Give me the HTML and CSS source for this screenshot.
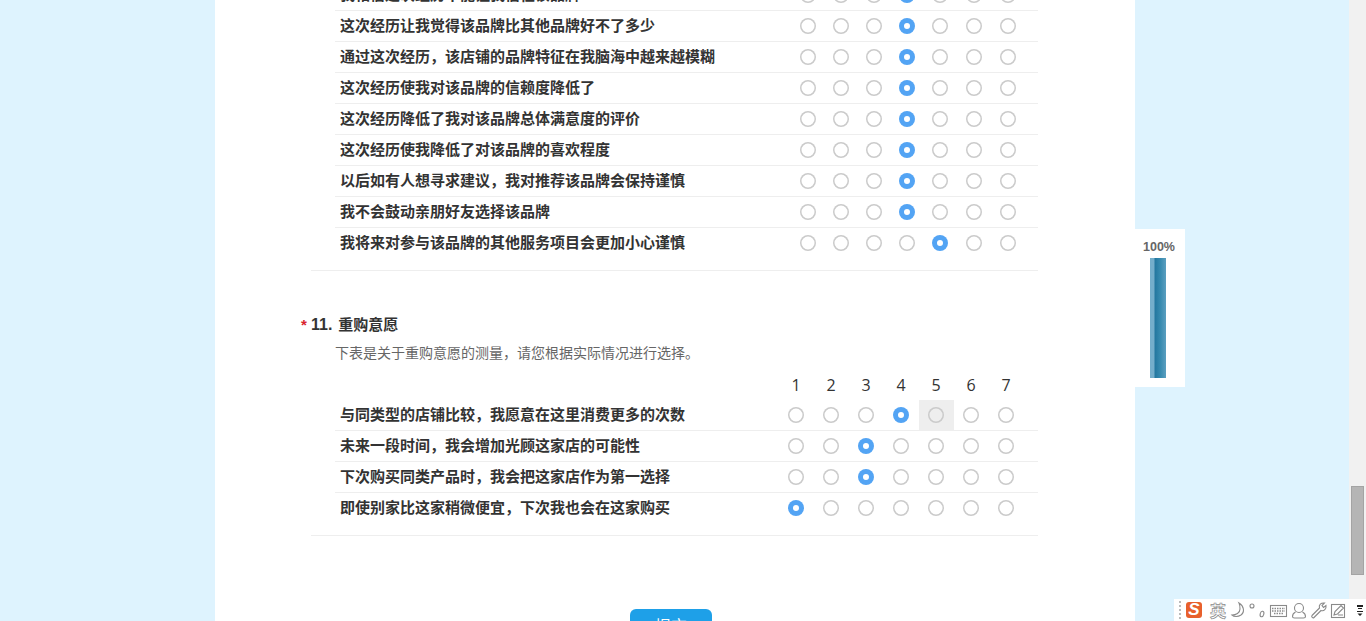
FILE: index.html
```html
<!DOCTYPE html>
<html>
<head>
<meta charset="utf-8">
<title>问卷</title>
<link rel="stylesheet" href="styles.css">
</head>
<body>
	<div class="page">
		<section class="panel">
			<div class="matrix first">
				<div class="row"><span class="label">我相信这次经历不能让我信任该品牌</span><i class="radio"></i><i class="radio"></i><i class="radio"></i><i class="radio on"></i><i class="radio"></i><i class="radio"></i><i class="radio"></i></div>
				<div class="row"><span class="label">这次经历让我觉得该品牌比其他品牌好不了多少</span><i class="radio"></i><i class="radio"></i><i class="radio"></i><i class="radio on"></i><i class="radio"></i><i class="radio"></i><i class="radio"></i></div>
				<div class="row"><span class="label">通过这次经历，该店铺的品牌特征在我脑海中越来越模糊</span><i class="radio"></i><i class="radio"></i><i class="radio"></i><i class="radio on"></i><i class="radio"></i><i class="radio"></i><i class="radio"></i></div>
				<div class="row"><span class="label">这次经历使我对该品牌的信赖度降低了</span><i class="radio"></i><i class="radio"></i><i class="radio"></i><i class="radio on"></i><i class="radio"></i><i class="radio"></i><i class="radio"></i></div>
				<div class="row"><span class="label">这次经历降低了我对该品牌总体满意度的评价</span><i class="radio"></i><i class="radio"></i><i class="radio"></i><i class="radio on"></i><i class="radio"></i><i class="radio"></i><i class="radio"></i></div>
				<div class="row"><span class="label">这次经历使我降低了对该品牌的喜欢程度</span><i class="radio"></i><i class="radio"></i><i class="radio"></i><i class="radio on"></i><i class="radio"></i><i class="radio"></i><i class="radio"></i></div>
				<div class="row"><span class="label">以后如有人想寻求建议，我对推荐该品牌会保持谨慎</span><i class="radio"></i><i class="radio"></i><i class="radio"></i><i class="radio on"></i><i class="radio"></i><i class="radio"></i><i class="radio"></i></div>
				<div class="row"><span class="label">我不会鼓动亲朋好友选择该品牌</span><i class="radio"></i><i class="radio"></i><i class="radio"></i><i class="radio on"></i><i class="radio"></i><i class="radio"></i><i class="radio"></i></div>
				<div class="row"><span class="label">我将来对参与该品牌的其他服务项目会更加小心谨慎</span><i class="radio"></i><i class="radio"></i><i class="radio"></i><i class="radio"></i><i class="radio on"></i><i class="radio"></i><i class="radio"></i></div>
			</div>
			<div class="divider first-end"></div>

			<div class="title"><span class="req">*</span><b class="num">11.</b><b>重购意愿</b></div>
			<div class="desc">下表是关于重购意愿的测量，请您根据实际情况进行选择。</div>

			<div class="matrix second">
				<div class="row head"><span class="label"></span><span class="n">1</span><span class="n">2</span><span class="n">3</span><span class="n">4</span><span class="n">5</span><span class="n">6</span><span class="n">7</span></div>
				<div class="row"><span class="label">与同类型的店铺比较，我愿意在这里消费更多的次数</span><i class="radio"></i><i class="radio"></i><i class="radio"></i><i class="radio on"></i><span class="cell"><i class="radio"></i></span><i class="radio"></i><i class="radio"></i></div>
				<div class="row"><span class="label">未来一段时间，我会增加光顾这家店的可能性</span><i class="radio"></i><i class="radio"></i><i class="radio on"></i><i class="radio"></i><i class="radio"></i><i class="radio"></i><i class="radio"></i></div>
				<div class="row"><span class="label">下次购买同类产品时，我会把这家店作为第一选择</span><i class="radio"></i><i class="radio"></i><i class="radio on"></i><i class="radio"></i><i class="radio"></i><i class="radio"></i><i class="radio"></i></div>
				<div class="row"><span class="label">即使别家比这家稍微便宜，下次我也会在这家购买</span><i class="radio on"></i><i class="radio"></i><i class="radio"></i><i class="radio"></i><i class="radio"></i><i class="radio"></i><i class="radio"></i></div>
			</div>
			<div class="divider second-end"></div>

			<div class="actions"><a class="submit" href="#">提交</a></div>
		</section>

		<aside class="progress">
			<span class="pct">100%</span>
			<div class="bar"></div>
		</aside>
	</div>

	<div class="scrollbar"><div class="thumb"></div></div>

	<div class="ime">
		<span class="grip"></span>
		<span class="ime-logo">S</span>
		<span class="ime-lang">英</span>
		<svg class="ime-icons" width="136" height="20" viewBox="0 0 136 20">
			<g fill="none" stroke="#8a8a8a" stroke-width="1.1">
				<!-- moon -->
				<path d="M9 3c5 3 6 9 2 12-3 2-7 2-9 0 4 0 8-2 8-6 0-2 0-4-1-6z"/>
				<!-- punctuation -->
				<circle cx="22" cy="6" r="2"/>
				<ellipse cx="32" cy="14" rx="1.800" ry="2.800" transform="rotate(15 32 14)"/>
				<!-- keyboard -->
				<rect x="40.500" y="5.500" width="16" height="11"/>
				<path d="M42 8.500h13M42 11h13M44 13.500h9" stroke-dasharray="1.500 1" stroke-width="1.300"/>
				<!-- user -->
				<circle cx="69" cy="8" r="4.500"/>
				<path d="M65.500 12c-2 1-3 3-3 4.500 0 1 1 1.500 2 1.500h9c1 0 2-.5 2-1.500 0-1.500-1-3.500-3-4.500"/>
				<!-- wrench -->
				<path d="M82 15.500l7.500-7.500c-1-3 1.500-5.500 5-5l-2.500 2.500 1.500 2 2.500-2c.5 3.500-2 6-5 5l-7 7c-1 1-3-.5-2-2z"/>
				<!-- edit -->
				<rect x="101.500" y="4.500" width="13" height="13"/>
				<path d="M104 15l1-3.500 6-6 2.500 2.500-6 6zM108 15h5"/>
			</g>
			<path d="M127 5h6v2h-6zM128 8h4v1h-4zM127 11h6v1h-6zM127.500 13.500h5l-2.500 2.500z" fill="#222"/>
		</svg>
	</div>
</body>
</html>
```

FILE: styles.css
```css
html,body{ margin:0; padding:0; height:100%; overflow:hidden;}
body{ display:flex; background:#def3fe; font-family:"Liberation Sans","Noto Sans CJK SC",sans-serif; color:#333;}

.page{ flex:1; position:relative; display:flex; justify-content:center; height:621px; overflow:hidden;}
.panel{ width:920px; height:700px; margin-left:1px; background:#fff; box-sizing:border-box; padding:0 97px 0 96px; margin-top:-20px;}

.matrix{ margin-left:24px;}
.row{ display:grid; height:30px; align-items:center; border-bottom:1px solid #eee; font-size:15px;}
.row:last-child{ border-bottom:0;}
.first .row{ grid-template-columns:456.5px repeat(4,33px) 33.5px 34px 34px; padding-right:13px;}
.second .row{ grid-template-columns:443.5px repeat(7,35px); padding-right:14.5px;}
.label{ padding:0 0 4px 5px; font-weight:bold; color:#333; white-space:nowrap;}

.radio{ display:block; justify-self:center; width:16px; height:16px; border-radius:50%; background:#fff; box-shadow:inset 0 0 0 1.5px #cbcbcb;}
.radio.on{ background:#fff; box-shadow:inset 0 0 0 5px #53a4f4;}
.cell{ align-self:stretch; display:flex; align-items:center; justify-content:center; background:#eee;}
.cell .radio{ background:transparent;}

.divider{ border-top:1px solid #eee;}
.first-end{ margin-top:12px;}
.second-end{ margin-top:12px;}

.title{ display:flex; align-items:baseline; margin:42px 0 0 -10px; height:20px; font-size:15px; color:#333;}
.req{ width:10px; color:#d9232e; font-size:15px; font-weight:bold;}
.num{ margin-right:6px; font-size:16px;}
.desc{ margin:10px 0 0 24px; font-size:14px; line-height:20px; color:#666;}

.head{ border-bottom:0; height:30px; margin-top:7px;}
.n{ justify-self:center; font:16px "Open Sans",sans-serif; color:#333;}

.actions{ display:flex; justify-content:center; margin-top:73px; padding-right:7px;}
.submit{ display:block; width:82px; height:36px; border-radius:6px; background:#1ea0e8; color:#fff; text-align:center; font-size:16px; line-height:36px; text-decoration:none;}

.progress{ position:absolute; left:1135px; top:229px; width:50px; height:158px; background:#fff; display:flex; flex-direction:column; align-items:center;}
.pct{ margin:11px 2px 0 0; height:14px; line-height:14px; font-size:12.5px; font-weight:bold; color:#666;}
.bar{ margin:4px 5px 0 0; width:16px; height:120px; background:linear-gradient(90deg,#74aecb 0,#74aecb 4px,#23779f 5px,#3589ae 10px,#5b9fc0 16px);}

.scrollbar{ width:17px; height:621px; background:#f1f1f1; position:relative;}
.thumb{ position:absolute; left:2px; top:486px; width:13px; height:89px; background:#b5b5b5; border:1px solid #a4a4a4; box-sizing:border-box;}

.ime{ position:absolute; left:1174px; top:599px; width:192px; height:22px; background:#fff; display:flex; align-items:center;}
.grip{ width:0; height:18px; margin:0 5px 0 5px; border-left:2px dotted #bbb;}
.ime-logo{ width:16px; height:16px; border-radius:3px; background:#e8602c; color:#fff; font-size:17px; font-style:italic; font-weight:bold; line-height:16px; text-align:center;}
.ime-lang{ width:16px; margin:0 4px 0 8px; padding-top:3px; font-size:16px; line-height:19px; color:#fff; font-weight:bold; -webkit-text-stroke:.7px #8a8a8a;}
.ime-icons{ display:block;}
```
